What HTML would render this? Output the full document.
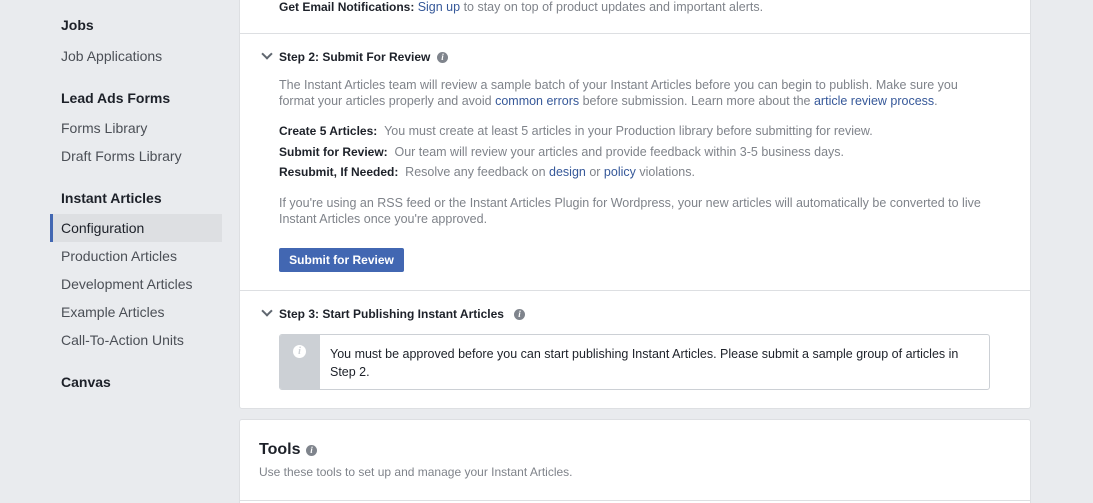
<!DOCTYPE html>
<html><head><meta charset="utf-8"><style>
*{margin:0;padding:0;box-sizing:border-box}
html,body{width:1093px;height:503px;overflow:hidden}
body{background:#e9ebee;font-family:"Liberation Sans",Helvetica,Arial,sans-serif;position:relative;color:#1d2129}
.a{position:absolute;white-space:nowrap}
.h{font-weight:bold;font-size:14px;color:#1d2129}
.s{font-size:14px;color:#4b4f56}
.card{position:absolute;left:239px;width:792px;background:#fff;border:1px solid #dddfe2;border-radius:3px}
.t{font-size:12.5px;color:#7f838a}
.b{font-size:12px;color:#1d2129;font-weight:bold}
.l{color:#365899}
.g{color:#7f838a;font-weight:normal;font-size:12.5px}
.chev{position:absolute;width:8px;height:8px;border-right:2px solid #606770;border-bottom:2px solid #606770;transform:rotate(45deg)}
.i{position:absolute;width:11px;height:11px;border-radius:50%;background:#7f848c;color:#fff;font-size:9px;font-weight:bold;font-style:italic;text-align:center;line-height:11px;font-family:"Liberation Serif",serif}
</style></head><body>
<div class="a h" style="left:61px;top:17px">Jobs</div>
<div class="a s" style="left:61px;top:48px">Job Applications</div>
<div class="a h" style="left:61px;top:90px">Lead Ads Forms</div>
<div class="a s" style="left:61px;top:120px">Forms Library</div>
<div class="a s" style="left:61px;top:148px">Draft Forms Library</div>
<div class="a h" style="left:61px;top:190px">Instant Articles</div>
<div class="a" style="left:50px;top:214px;width:172px;height:28px;background:#dddfe2;border-left:3px solid #4267b2"></div>
<div class="a s" style="left:61px;top:220px;color:#1d2129">Configuration</div>
<div class="a s" style="left:61px;top:248px">Production Articles</div>
<div class="a s" style="left:61px;top:276px">Development Articles</div>
<div class="a s" style="left:61px;top:304px">Example Articles</div>
<div class="a s" style="left:61px;top:332px">Call-To-Action Units</div>
<div class="a h" style="left:61px;top:374px">Canvas</div>

<div class="card" style="top:-10px;height:419px">
<div class="a b" style="left:39px;top:9px">Get Email Notifications: <span class="l g" style="color:#365899">Sign up</span><span class="g"> to stay on top of product updates and important alerts.</span></div>
<div class="a" style="left:0;top:42px;width:790px;height:1px;background:#dddfe2"></div>
<div class="chev" style="left:23px;top:59px"></div>
<div class="a b" style="left:39px;top:59px">Step 2: Submit For Review</div>
<div class="i" style="left:197px;top:61px">i</div>
<div class="a t" style="left:39px;top:86px;line-height:16px">The Instant Articles team will review a sample batch of your Instant Articles before you can begin to publish. Make sure you<br>format your articles properly and avoid <span class="l">common errors</span> before submission. Learn more about the <span class="l">article review process</span>.</div>
<div class="a b" style="left:39px;top:133px">Create 5 Articles: <span class="g">&nbsp;You must create at least 5 articles in your Production library before submitting for review.</span></div>
<div class="a b" style="left:39px;top:154px">Submit for Review: <span class="g">&nbsp;Our team will review your articles and provide feedback within 3-5 business days.</span></div>
<div class="a b" style="left:39px;top:174px">Resubmit, If Needed: <span class="g">&nbsp;Resolve any feedback on <span class="l">design</span> or <span class="l">policy</span> violations.</span></div>
<div class="a t" style="left:39px;top:204px;line-height:16px">If you're using an RSS feed or the Instant Articles Plugin for Wordpress, your new articles will automatically be converted to live<br>Instant Articles once you're approved.</div>
<div class="a" style="left:39px;top:257px;width:125px;height:24px;background:#4267b2;border-radius:2px;color:#fff;font-size:12px;font-weight:bold;text-align:center;line-height:24px">Submit for Review</div>
<div class="a" style="left:0;top:299px;width:790px;height:1px;background:#dddfe2"></div>
<div class="chev" style="left:23px;top:316px"></div>
<div class="a b" style="left:39px;top:316px">Step 3: Start Publishing Instant Articles</div>
<div class="i" style="left:274px;top:318px">i</div>
<div class="a" style="left:39px;top:343px;width:711px;height:56px;border:1px solid #ccd0d5;border-radius:3px;background:#fff;overflow:hidden">
<div class="a" style="left:0;top:0;width:40px;height:56px;background:#ccd0d5"></div>
<div class="i" style="left:13px;top:10px;background:#fff;color:#ccd0d5;width:13px;height:13px;line-height:13px;font-size:10px">i</div>
<div class="a" style="left:50px;top:10px;font-size:12.5px;color:#1d2129;line-height:18px">You must be approved before you can start publishing Instant Articles. Please submit a sample group of articles in<br>Step 2.</div>
</div>
</div>

<div class="card" style="top:419px;height:100px">
<div class="a" style="left:19px;top:21px;font-size:16px;font-weight:bold;color:#1d2129">Tools</div>
<div class="i" style="left:66px;top:25px">i</div>
<div class="a t" style="left:19px;top:45px;font-size:12px">Use these tools to set up and manage your Instant Articles.</div>
<div class="a" style="left:0;top:80px;width:790px;height:1px;background:#dddfe2"></div>
</div>
</body></html>
